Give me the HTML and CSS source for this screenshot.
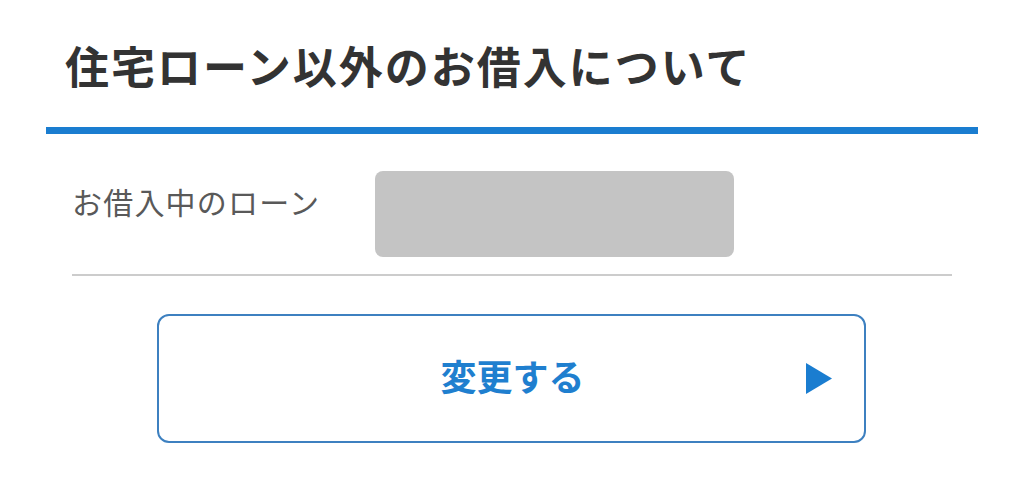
FILE: index.html
```html
<!DOCTYPE html>
<html lang="ja">
<head>
<meta charset="utf-8">
<link rel="stylesheet" href="styles.css">
</head>
<body>
<div class="page">
  <div class="header">
    <h1 class="title">住宅ローン以外のお借入について</h1>
  </div>
  <div class="row">
    <div class="label">お借入中のローン</div>
    <div class="value"></div>
  </div>
  <div class="actions">
    <button class="btn" type="button">
      <span class="btn-text">変更する</span>
      <svg class="btn-arrow" width="26" height="31" viewBox="0 0 26 31"><polygon points="0,0 26,15.5 0,31" fill="#1a7dd0"/></svg>
    </button>
  </div>
</div>
</body>
</html>
```

FILE: styles.css
```css
html, body {
  margin: 0;
  padding: 0;
  background: #ffffff;
}
body {
  font-family: "Noto Sans CJK JP", "Noto Sans", sans-serif;
  width: 1024px;
  height: 499px;
  overflow: hidden;
}
.page {
  margin-left: 46px;
  width: 932px;
}
.header {
  height: 127px;
  border-bottom: 7px solid #1a7dd0;
  box-sizing: content-box;
  display: flex;
  align-items: flex-start;
}
.title {
  margin: 0;
  padding: 0 0 0 19px;
  margin-top: 38px;
  font-size: 44px;
  line-height: 54px;
  font-weight: 700;
  color: #333333;
  letter-spacing: 2px;
}
.row {
  margin: 0 26px;
  height: 140px;
  border-bottom: 2px solid #cccccc;
  display: flex;
  align-items: flex-start;
}
.label {
  margin-top: 46px;
  margin-left: 0;
  width: 303px;
  font-size: 30px;
  line-height: 42px;
  letter-spacing: 1.2px;
  color: #595959;
}
.value {
  margin-top: 37px;
  width: 359px;
  height: 86px;
  background: #c4c4c4;
  border-radius: 8px;
}
.actions {
  padding-top: 38px;
  padding-left: 111px;
}
.btn {
  width: 709px;
  height: 129px;
  box-sizing: border-box;
  border: 2px solid #3d80c0;
  border-radius: 12px;
  background: #ffffff;
  position: relative;
  display: flex;
  align-items: center;
  justify-content: center;
  padding: 0;
  font-family: inherit;
  cursor: pointer;
}
.btn-text {
  font-size: 36px;
  font-weight: 700;
  color: #1f7fcf;
  line-height: 1;
  margin-bottom: 8px;
  margin-left: 2px;
}
.btn-arrow {
  position: absolute;
  right: 32px;
  top: 47px;
}
```
